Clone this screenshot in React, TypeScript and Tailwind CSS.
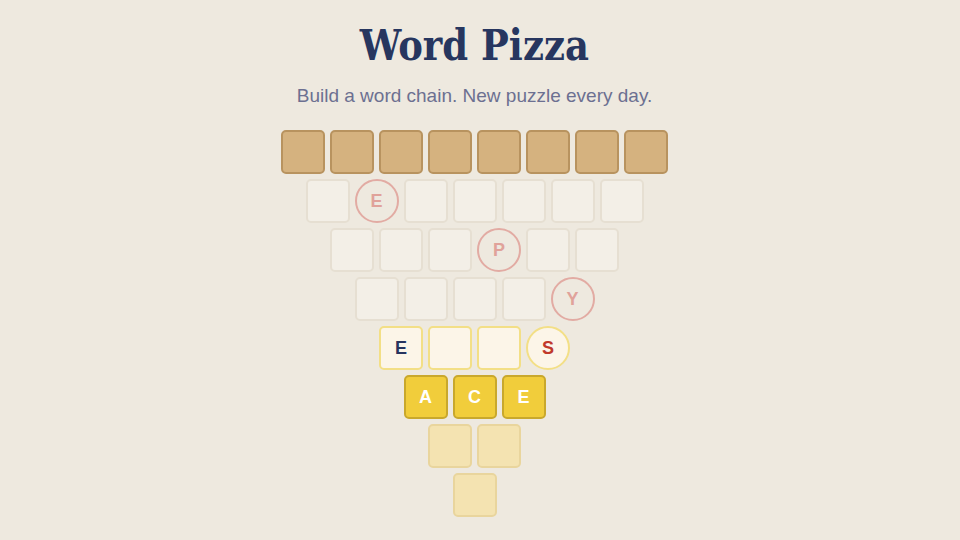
type Kind = "crust" | "empty" | "ring" | "active" | "activeRing" | "filled" | "pale";

type Cell = { kind: Kind; letter?: string; tone?: "navy" | "red" };

const rows: Cell[][] = [
  Array.from({ length: 8 }, () => ({ kind: "crust" as Kind })),
  [
    { kind: "empty" },
    { kind: "ring", letter: "E" },
    { kind: "empty" },
    { kind: "empty" },
    { kind: "empty" },
    { kind: "empty" },
    { kind: "empty" },
  ],
  [
    { kind: "empty" },
    { kind: "empty" },
    { kind: "empty" },
    { kind: "ring", letter: "P" },
    { kind: "empty" },
    { kind: "empty" },
  ],
  [
    { kind: "empty" },
    { kind: "empty" },
    { kind: "empty" },
    { kind: "empty" },
    { kind: "ring", letter: "Y" },
  ],
  [
    { kind: "active", letter: "E", tone: "navy" },
    { kind: "active" },
    { kind: "active" },
    { kind: "activeRing", letter: "S", tone: "red" },
  ],
  [
    { kind: "filled", letter: "A" },
    { kind: "filled", letter: "C" },
    { kind: "filled", letter: "E" },
  ],
  [{ kind: "pale" }, { kind: "pale" }],
  [{ kind: "pale" }],
];

const kindClass: Record<Kind, string> = {
  crust: "rounded-[5px] bg-[#d5b27f] border-2 border-[#b8935f]",
  empty: "rounded-[5px] bg-[#f3efe7] border-2 border-[#e6dfd2]",
  ring: "rounded-full border-2 border-[#e2aba3] text-[#e0a29a]",
  active: "rounded-[5px] bg-[#fcf5e8] border-2 border-[#f3df86]",
  activeRing: "rounded-full bg-[#fcf5e8] border-2 border-[#f3df86]",
  filled: "rounded-[5px] bg-[#f1cd3b] border-2 border-[#c9a82c] text-white",
  pale: "rounded-[5px] bg-[#f4e3b1] border-2 border-[#e9d59d]",
};

const toneClass = { navy: "text-[#27345f]", red: "text-[#c0392b]" };

const Tile = ({ cell }: { cell: Cell }) => (
  <div
    className={`w-[44px] h-[44px] flex items-center justify-center text-[18px] font-bold ${kindClass[cell.kind]} ${
      cell.tone ? toneClass[cell.tone] : ""
    }`}
  >
    {cell.letter}
  </div>
);

export default function App() {
  return (
    <div className="w-full h-[540px] bg-[#eee9df] flex flex-col items-center pr-[11px] font-['Liberation_Sans',Arial,sans-serif]">
      <h1 className="mt-[19px] text-[43px] leading-[52px] font-bold text-[#27365f] font-['DejaVu_Serif',serif] origin-center scale-x-[0.86]">
        Word Pizza
      </h1>
      <p className="mt-[13px] text-[19px] leading-[24px] text-[#6c7091]">
        Build a word chain. New puzzle every day.
      </p>
      <div className="mt-[22px] flex flex-col items-center gap-[5px]">
        {rows.map((row, i) => (
          <div key={i} className="flex gap-[5px]">
            {row.map((cell, j) => (
              <Tile key={j} cell={cell} />
            ))}
          </div>
        ))}
      </div>
    </div>
  );
}
